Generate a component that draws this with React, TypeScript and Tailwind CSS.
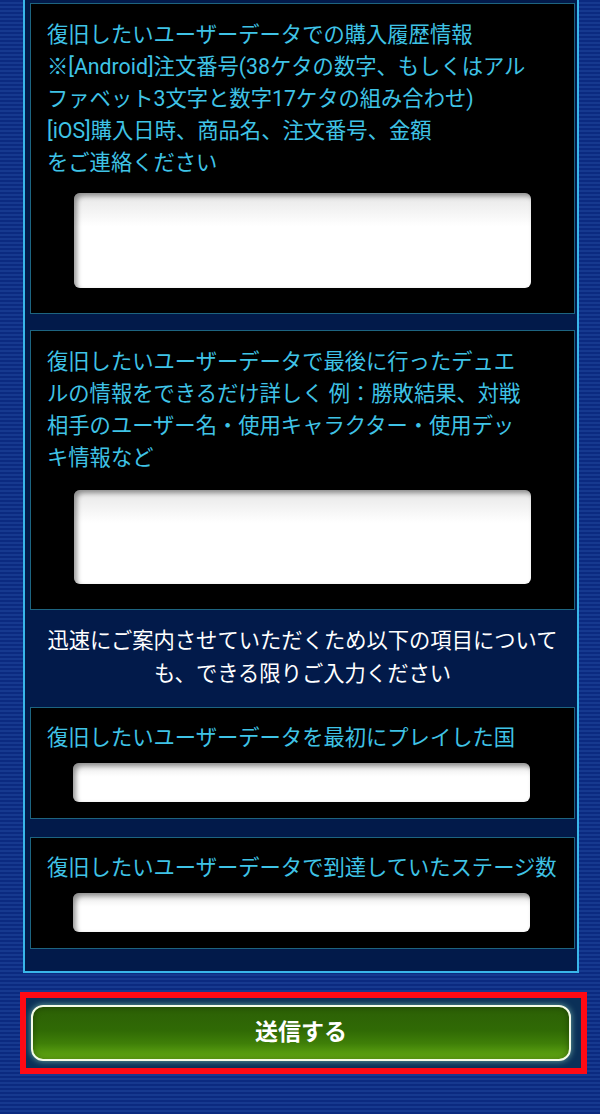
import React from 'react'

const font = { fontFamily: 'Roboto, "Noto Sans CJK JP", "Noto Sans", sans-serif' }

type Field = {
  lines: string[]
  box: string
  input: string
}

const inputBase =
  'w-[457px] rounded-[6px] bg-[linear-gradient(to_bottom,#e6e6e6_0%,#ffffff_35%,#ffffff_100%)] shadow-[inset_3px_3px_5px_rgba(0,0,0,0.4)]'

const topFields: Field[] = [
  {
    lines: [
      '復旧したいユーザーデータでの購入履歴情報',
      '※[Android]注文番号(38ケタの数字、もしくはアル',
      'ファベット3文字と数字17ケタの組み合わせ)',
      '[iOS]購入日時、商品名、注文番号、金額',
      'をご連絡ください',
    ],
    box: 'pt-[15px] pb-[25px]',
    input: 'ml-[27px] mt-[14px] h-[95px]',
  },
  {
    lines: [
      '復旧したいユーザーデータで最後に行ったデュエ',
      'ルの情報をできるだけ詳しく 例：勝敗結果、対戦',
      '相手のユーザー名・使用キャラクター・使用デッ',
      'キ情報など',
    ],
    box: 'pt-[15px] pb-[25px]',
    input: 'ml-[27px] mt-[16px] h-[94px]',
  },
]

const bottomFields: Field[] = [
  {
    lines: ['復旧したいユーザーデータを最初にプレイした国'],
    box: 'pt-[14px] pb-[16px]',
    input: 'ml-[26px] mt-[9px] h-[39px]',
  },
  {
    lines: ['復旧したいユーザーデータで到達していたステージ数'],
    box: 'pt-[14px] pb-[16px]',
    input: 'ml-[26px] mt-[9px] h-[39px]',
  },
]

function Panel({ field }: { field: Field }) {
  return (
    <div className={`border border-[#1d6480] bg-black pl-4 pr-1 ${field.box}`}>
      <div className="whitespace-nowrap text-[21.3px] leading-[32px] text-[#3fc3e6]">
        {field.lines.map((l) => (
          <div key={l}>{l}</div>
        ))}
      </div>
      <div className={`${inputBase} ${field.input}`} />
    </div>
  )
}

export default function App() {
  return (
    <div
      style={font}
      className="min-h-[1114px] w-[600px] bg-[repeating-linear-gradient(to_bottom,#0b2a80_0px,#0b2a80_2px,#16398f_2px,#16398f_4px)] pb-[42px]"
    >
      <div className="ml-[23px] w-[556px] border-2 border-t-0 border-[#39b6ea] bg-[#021a4a] pb-[22px] pl-[5px] pr-[2px] pt-[3px]">
        <div className="flex flex-col gap-4">
          {topFields.map((f) => (
            <Panel key={f.lines[0]} field={f} />
          ))}
        </div>

        <div className="whitespace-nowrap pb-[17px] pt-[14px] text-center text-[21.3px] leading-[33px] text-white">
          <div>迅速にご案内させていただくため以下の項目について</div>
          <div>も、できる限りご入力ください</div>
        </div>

        <div className="flex flex-col gap-[18px]">
          {bottomFields.map((f) => (
            <Panel key={f.lines[0]} field={f} />
          ))}
        </div>
      </div>

      <div className="ml-[20px] mt-[19px] w-[567px] border-[6px] border-[#ff0a14] bg-[#0b3058] py-[7px] pl-[5px] pr-[10px]">
        <button
          type="button"
          className="flex h-[56px] w-full items-center justify-center rounded-[12px] border-2 border-[#f4fbe8] bg-[linear-gradient(to_bottom,#2c6006_0%,#306a05_45%,#3f7f08_70%,#66ad14_100%)] text-[23px] font-bold text-white shadow-[0_0_6px_rgba(150,220,190,0.7),inset_0_0_6px_rgba(0,0,0,0.35)]"
        >
          送信する
        </button>
      </div>
    </div>
  )
}
